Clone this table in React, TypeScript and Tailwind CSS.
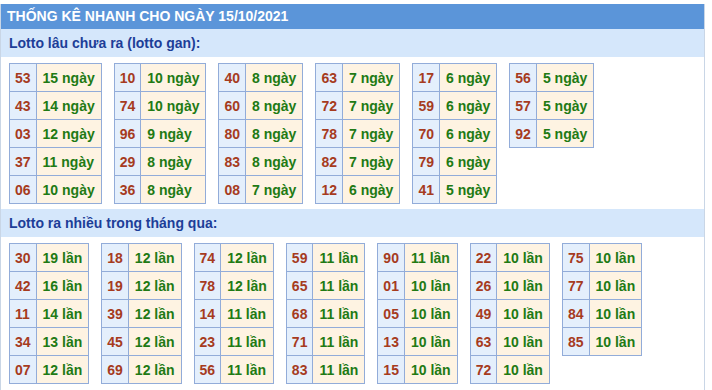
type Row = [string, string];

const gan: Row[][] = [
  [["53", "15"], ["43", "14"], ["03", "12"], ["37", "11"], ["06", "10"]],
  [["10", "10"], ["74", "10"], ["96", "9"], ["29", "8"], ["36", "8"]],
  [["40", "8"], ["60", "8"], ["80", "8"], ["83", "8"], ["08", "7"]],
  [["63", "7"], ["72", "7"], ["78", "7"], ["82", "7"], ["12", "6"]],
  [["17", "6"], ["59", "6"], ["70", "6"], ["79", "6"], ["41", "5"]],
  [["56", "5"], ["57", "5"], ["92", "5"]],
];

const nhieu: Row[][] = [
  [["30", "19"], ["42", "16"], ["11", "14"], ["34", "13"], ["07", "12"]],
  [["18", "12"], ["19", "12"], ["39", "12"], ["45", "12"], ["69", "12"]],
  [["74", "12"], ["78", "12"], ["14", "11"], ["23", "11"], ["56", "11"]],
  [["59", "11"], ["65", "11"], ["68", "11"], ["71", "11"], ["83", "11"]],
  [["90", "11"], ["01", "10"], ["05", "10"], ["13", "10"], ["15", "10"]],
  [["22", "10"], ["26", "10"], ["49", "10"], ["63", "10"], ["72", "10"]],
  [["75", "10"], ["77", "10"], ["84", "10"], ["85", "10"]],
];

function StatTable({ rows, unit }: { rows: Row[]; unit: string }) {
  return (
    <table className="border-collapse self-start">
      <tbody>
        {rows.map(([num, count]) => (
          <tr key={num} className="h-[28px]">
            <td className="border border-[#92acd9] bg-[#e4effc] px-[5px] text-[#a63b1e]">{num}</td>
            <td className="border border-[#92acd9] bg-[#fef3e2] px-[6px] text-[#217a14]">
              {count} {unit}
            </td>
          </tr>
        ))}
      </tbody>
    </table>
  );
}

function SectionTitle({ title }: { title: string }) {
  return (
    <div className="h-[28px] flex items-center px-[8px] bg-[#d5e7fb] text-[#1d3e98] font-bold text-[14px]">
      {title}
    </div>
  );
}

export default function App() {
  return (
    <div className="bg-white w-[712px] h-[390px] pt-[4px] font-['Liberation_Sans',Arial,sans-serif]">
      <div className="w-[705px] border-x border-[#c9d6e6]">
        <div className="h-[25px] flex items-center px-[6px] bg-[#5b95d9] text-white font-bold text-[14px]">
          THỐNG KÊ NHANH CHO NGÀY 15/10/2021
        </div>
        <SectionTitle title="Lotto lâu chưa ra (lotto gan):" />
        <div className="flex gap-3 px-[8px] pt-[6px] pb-[5px] text-[14px] font-bold leading-4">
          {gan.map((rows, i) => (
            <StatTable key={i} rows={rows} unit="ngày" />
          ))}
        </div>
        <SectionTitle title="Lotto ra nhiều trong tháng qua:" />
        <div className="flex gap-3 px-[8px] pt-[6px] pb-[8px] text-[14px] font-bold leading-4">
          {nhieu.map((rows, i) => (
            <StatTable key={i} rows={rows} unit="lần" />
          ))}
        </div>
      </div>
    </div>
  );
}
